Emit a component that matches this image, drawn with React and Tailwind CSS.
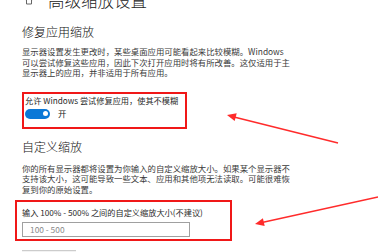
const font = { fontFamily: '"Noto Sans CJK SC", "Noto Sans", sans-serif' };

function Toggle() {
  return (
    <div className="flex h-[10px] w-[25px] items-center justify-end rounded-full bg-[#0a78d7] pr-[2px]">
      <div className="h-[5px] w-[5px] rounded-full bg-white" />
    </div>
  );
}

function Arrows() {
  return (
    <svg className="pointer-events-none absolute left-0 top-0" width="378" height="252">
      <line x1="338" y1="143" x2="234" y2="117" stroke="#ff2b2b" strokeWidth="1.4" />
      <polygon points="227,115 236.7,113.3 234.7,121.1" fill="#ff2b2b" />
      <line x1="378" y1="197" x2="262" y2="222.5" stroke="#ff2b2b" strokeWidth="1.4" />
      <polygon points="255,224 264.7,226 262.9,218.2" fill="#ff2b2b" />
    </svg>
  );
}

export default function App() {
  return (
    <div className="relative h-[252px] w-[378px] overflow-hidden bg-white" style={font}>
      <div className="pl-[22px]">
        {/* title, cut off at the top */}
        <div className="-mt-[10px] flex h-[20px] items-center">
          <svg width="10" height="10" viewBox="0 0 10 10" className="ml-[2px]">
            <path d="M1 5 L5 1.5 L9 5 M2.5 4 V9 H7.5 V4" fill="none" stroke="#666" strokeWidth="1" />
          </svg>
          <span className="ml-[14px] text-[16.5px] font-light leading-[20px] text-[#222]">高级缩放设置</span>
        </div>

        {/* 修复应用缩放 */}
        <div className="mt-[14px] text-[12px] font-light leading-[16px] text-[#111]">修复应用缩放</div>
        <p className="mt-[6px] whitespace-nowrap text-[8.4px] leading-[10.5px] text-[#3a3a3a]">
          显示器设置发生更改时，某些桌面应用可能看起来比较模糊。Windows
          <br />
          可以尝试修复这些应用，因此下次打开应用时将有所改善。这仅适用于主
          <br />
          显示器上的应用，并非适用于所有应用。
        </p>

        <div className="mt-[14px] h-[37px] w-[165px] border-2 border-[#f01818] pl-[1px]">
          <div className="whitespace-nowrap text-[8.2px] leading-[12px] text-[#2a2a2a]">
            允许 Windows 尝试修复应用，使其不模糊
          </div>
          <div className="mt-[2px] flex h-[12px] items-center">
            <Toggle />
            <span className="ml-[8px] text-[8.4px] text-[#222]">开</span>
          </div>
        </div>

        {/* 自定义缩放 */}
        <div className="mt-[10px] text-[12px] font-light leading-[16px] text-[#111]">自定义缩放</div>
        <p className="mt-[8px] whitespace-nowrap text-[8.4px] leading-[10.5px] text-[#3a3a3a]">
          你的所有显示器都将设置为你输入的自定义缩放大小。如果某个显示器不
          <br />
          支持该大小，这可能导致一些文本、应用和其他项无法读取。可能很难恢
          <br />
          复到你的原始设置。
        </p>

        <div className="-ml-[7px] mt-[6px] h-[41px] w-[217px] border-2 border-[#f01818] pl-[5px] pt-[5px]">
          <div className="whitespace-nowrap text-[8.2px] leading-[11px] text-[#2a2a2a]">
            输入 100% - 500% 之间的自定义缩放大小(不建议)
          </div>
          <div className="mt-[4px] flex h-[15px] w-[168px] items-center border border-[#a0a0a0] pl-[7px] text-[8.4px] text-[#8a8a8a]">
            100 - 500
          </div>
        </div>

        <div className="mt-[9px] h-[12px] w-[54px] border-t border-[#ccc] bg-[#f2f2f2]" />
      </div>
      <Arrows />
    </div>
  );
}
